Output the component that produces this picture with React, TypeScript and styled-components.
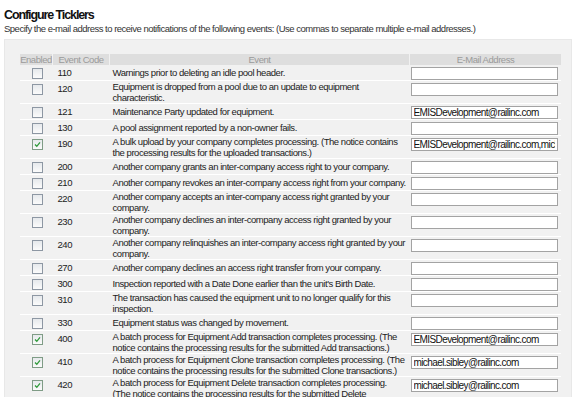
import React from "react";
import styled, { createGlobalStyle } from "styled-components";

const FONT = '"Liberation Sans", Arial, sans-serif';

const GlobalStyle = createGlobalStyle`
  html, body { margin: 0; padding: 0; background: #fff; }
  body { font-family: ${FONT}; color: #222; }
`;

const Page = styled.div`
  padding: 8px 4px 0 4px;
  width: 568px;
`;

const Title = styled.h1`
  margin: 0;
  font-size: 12.5px;
  line-height: 15px;
  font-weight: bold;
  letter-spacing: -1.1px;
  color: #111;
`;

const Subtitle = styled.p`
  margin: 0;
  font-size: 9.5px;
  line-height: 11px;
  letter-spacing: -0.5px;
  color: #333;
`;

const Panel = styled.div`
  margin-top: 5px;
  background: #f1f1f1;
  border: 1px solid #e8e8e8;
  padding: 14px 14px 0 15px;
`;

const Table = styled.table`
  border-collapse: collapse;
  table-layout: fixed;
  width: 538px;
`;

const Th = styled.th<{ $w: number }>`
  width: ${(p) => p.$w}px;
  background: #dedede;
  color: #9a9a9a;
  font-weight: normal;
  font-size: 9.5px;
  letter-spacing: -0.45px;
  line-height: 11px;
  height: 11px;
  padding: 0;
  text-align: center;
  white-space: nowrap;
  overflow: hidden;
  border-right: 1px solid #f1f1f1;
  &:last-child { border-right: none; }
`;

const Tr = styled.tr`
  border-bottom: 1px solid #fff;
`;

const Td = styled.td<{ $pl?: number; $top?: boolean }>`
  padding: ${(p) => (p.$top ? 2 : 0)}px 0 0 ${(p) => p.$pl ?? 0}px;
  vertical-align: ${(p) => (p.$top ? "top" : "middle")};
  font-size: 9.5px;
  letter-spacing: -0.45px;
  line-height: 11px;
  color: #222;
  white-space: nowrap;
  overflow: hidden;
`;

const InputCell = styled.td`
  padding: 0;
  vertical-align: top;
`;

const CheckCell = styled.td`
  padding: 3px 0 0 0;
  vertical-align: top;
  text-align: center;
  font-size: 0;
  line-height: 0;
`;

const Box = styled.span<{ $checked: boolean }>`
  display: inline-block;
  vertical-align: top;
  width: 9px;
  height: 9px;
  border: 1px solid ${(p) => (p.$checked ? "#7f9c86" : "#8d97a3")};
  background: linear-gradient(#e6e9ec, #fbfbfb);
  position: relative;
  margin-left: 2px;
  svg { position: absolute; left: 1px; top: 1px; }
`;

const EmailInput = styled.input`
  display: block;
  box-sizing: border-box;
  width: 147px;
  height: 13px;
  margin: 2px 0 0 1px;
  padding: 0 2px;
  border: 1px solid #a3a3a3;
  background: #fff;
  font-family: ${FONT};
  font-size: 10px;
  line-height: 11px;
  letter-spacing: -0.6px;
  color: #111;
  outline: none;
`;

type Row = { code: string; lines: string[]; checked?: boolean; email?: string };

const rows: Row[] = [
  { code: "110", lines: ["Warnings prior to deleting an idle pool header."] },
  { code: "120", lines: ["Equipment is dropped from a pool due to an update to equipment", "characteristic."] },
  { code: "121", lines: ["Maintenance Party updated for equipment."], email: "EMISDevelopment@railinc.com" },
  { code: "130", lines: ["A pool assignment reported by a non-owner fails."] },
  {
    code: "190",
    lines: ["A bulk upload by your company completes processing. (The notice contains", "the processing results for the uploaded transactions.)"],
    checked: true,
    email: "EMISDevelopment@railinc.com,michael.sibley@railinc.com",
  },
  { code: "200", lines: ["Another company grants an inter-company access right to your company."] },
  { code: "210", lines: ["Another company revokes an inter-company access right from your company."] },
  { code: "220", lines: ["Another company accepts an inter-company access right granted by your", "company."] },
  { code: "230", lines: ["Another company declines an inter-company access right granted by your", "company."] },
  { code: "240", lines: ["Another company relinquishes an inter-company access right granted by your", "company."] },
  { code: "270", lines: ["Another company declines an access right transfer from your company."] },
  { code: "300", lines: ["Inspection reported with a Date Done earlier than the unit's Birth Date."] },
  { code: "310", lines: ["The transaction has caused the equipment unit to no longer qualify for this", "inspection."] },
  { code: "330", lines: ["Equipment status was changed by movement."] },
  {
    code: "400",
    lines: ["A batch process for Equipment Add transaction completes processing. (The", "notice contains the processing results for the submitted Add transactions.)"],
    checked: true,
    email: "EMISDevelopment@railinc.com",
  },
  {
    code: "410",
    lines: ["A batch process for Equipment Clone transaction completes processing. (The", "notice contains the processing results for the submitted Clone transactions.)"],
    checked: true,
    email: "michael.sibley@railinc.com",
  },
  {
    code: "420",
    lines: ["A batch process for Equipment Delete transaction completes processing.", "(The notice contains the processing results for the submitted Delete", "transactions.)"],
    checked: true,
    email: "michael.sibley@railinc.com",
  },
];

const Check = ({ checked }: { checked: boolean }) => (
  <Box $checked={checked}>
    {checked && (
      <svg width="7" height="7" viewBox="0 0 7 7">
        <path d="M1 3.5 L2.8 5.3 L6 1.3" fill="none" stroke="#2f9a3a" strokeWidth="1.3" />
      </svg>
    )}
  </Box>
);

export default function App() {
  return (
    <>
      <GlobalStyle />
      <Page>
        <Title>Configure Ticklers</Title>
        <Subtitle>
          Specify the e-mail address to receive notifications of the following events: (Use commas to separate multiple e-mail addresses.)
        </Subtitle>
        <Panel>
          <Table>
            <thead>
              <tr>
                <Th $w={32}>Enabled</Th>
                <Th $w={56}>Event Code</Th>
                <Th $w={299}>Event</Th>
                <Th $w={151}>E-Mail Address</Th>
              </tr>
            </thead>
            <tbody>
              {rows.map((r) => (
                <Tr key={r.code}>
                  <CheckCell>
                    <Check checked={!!r.checked} />
                  </CheckCell>
                  <Td $pl={5} $top>
                    {r.code}
                  </Td>
                  <Td $pl={3}>
                    {r.lines.map((l, i) => (
                      <React.Fragment key={i}>
                        {i > 0 && <br />}
                        {l}
                      </React.Fragment>
                    ))}
                  </Td>
                  <InputCell>
                    <EmailInput type="text" defaultValue={r.email ?? ""} readOnly />
                  </InputCell>
                </Tr>
              ))}
            </tbody>
          </Table>
        </Panel>
      </Page>
    </>
  );
}
